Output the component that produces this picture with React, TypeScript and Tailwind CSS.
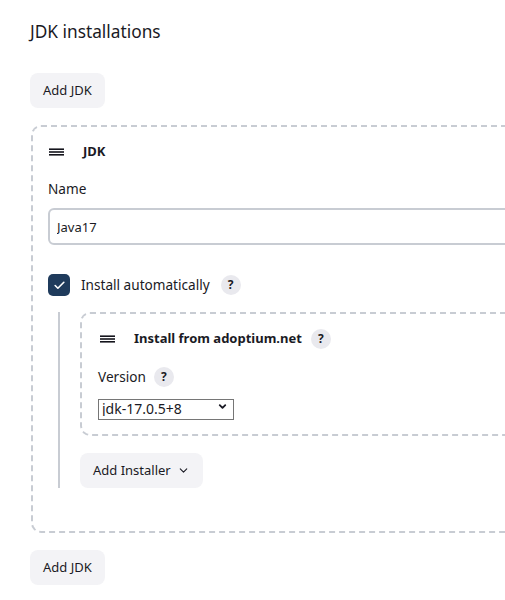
import { Check, ChevronDown } from 'lucide-react';

const font = { fontFamily: '"Noto Sans", "Open Sans", sans-serif' };

const Grip: React.FC = () => (
  <svg width="15" height="8" viewBox="0 0 15 8" className="shrink-0 text-[#14141c]">
    <line x1="0" y1="1.2" x2="15" y2="1.2" stroke="currentColor" strokeWidth="1.6" />
    <line x1="0" y1="4" x2="15" y2="4" stroke="currentColor" strokeWidth="1.6" />
    <line x1="0" y1="6.8" x2="15" y2="6.8" stroke="currentColor" strokeWidth="1.6" />
  </svg>
);

const Help: React.FC = () => (
  <span className="w-5 h-5 rounded-full bg-[#e9e9ee] text-[#1a1a24] flex items-center justify-center text-[12px] font-bold leading-none">
    ?
  </span>
);

const AddButton: React.FC<{ label: string; chevron?: boolean }> = ({ label, chevron }) => (
  <button className="h-[35px] px-[13px] rounded-lg bg-[#f3f3f6] text-[13px] text-[#1a1a24] flex items-center gap-[6px] self-start">
    {label}
    {chevron && <ChevronDown className="w-[13px] h-[13px]" strokeWidth={2} />}
  </button>
);

export default function App() {
  return (
    <div className="w-[505px] h-[600px] overflow-hidden bg-white text-[#1a1a24]" style={font}>
      <div className="pl-[30px] pt-[20px] w-[600px] flex flex-col">
        <h2 className="text-[17.3px] leading-6 font-normal">JDK installations</h2>

        <div className="mt-[29px] flex">
          <AddButton label="Add JDK" />
        </div>

        <div className="mt-[17px] ml-[1px] border-2 border-dashed border-[#c8ccd3] rounded-[10px] pl-[15px] pt-[15px] pb-[43px] flex flex-col">
          <div className="flex items-center h-5 gap-[19px] pl-[1px]">
            <Grip />
            <span className="text-[13px] font-bold">JDK</span>
          </div>

          <label className="mt-[17px] h-5 flex items-center text-[13.6px]">Name</label>
          <input
            defaultValue="Java17"
            className="mt-[9px] h-[37px] border-2 border-[#c8ccd3] rounded-md px-[7px] text-[13px] outline-none"
          />

          <div className="mt-[29px] flex items-center gap-[11px]">
            <span className="w-[22px] h-[22px] rounded-[5px] bg-[#1f3b5c] flex items-center justify-center">
              <Check className="w-[13px] h-[13px] text-white" strokeWidth={3} />
            </span>
            <span className="text-[13.6px]">Install automatically</span>
            <Help />
          </div>

          <div className="mt-[16px] flex">
            <div className="ml-[10px] w-[2px] bg-[#c8ccd3]" />
            <div className="ml-[20px] flex-1 flex flex-col">
              <div className="border-2 border-dashed border-[#c8ccd3] rounded-[10px] pl-[16px] pt-[15px] pb-[17px] flex flex-col">
                <div className="flex items-center h-5 pl-[2px]">
                  <Grip />
                  <span className="ml-[19px] text-[13px] font-bold">Install from adoptium.net</span>
                  <span className="ml-[9px]">
                    <Help />
                  </span>
                </div>

                <div className="mt-[18px] flex items-center h-5 gap-2">
                  <span className="text-[13.6px]">Version</span>
                  <Help />
                </div>

                <div className="mt-[9px] relative w-[136px] h-[21px]">
                  <select className="appearance-none w-full h-full border border-[#767676] bg-white pl-[3px] text-[14px] leading-none outline-none">
                    <option>jdk-17.0.5+8</option>
                  </select>
                  <ChevronDown
                    className="absolute right-[6px] top-[5px] w-[11px] h-[11px] pointer-events-none"
                    strokeWidth={4}
                  />
                </div>
              </div>

              <div className="mt-[17px] flex">
                <AddButton label="Add Installer" chevron />
              </div>
            </div>
          </div>
        </div>

        <div className="mt-[17px] flex">
          <AddButton label="Add JDK" />
        </div>
      </div>
    </div>
  );
}
